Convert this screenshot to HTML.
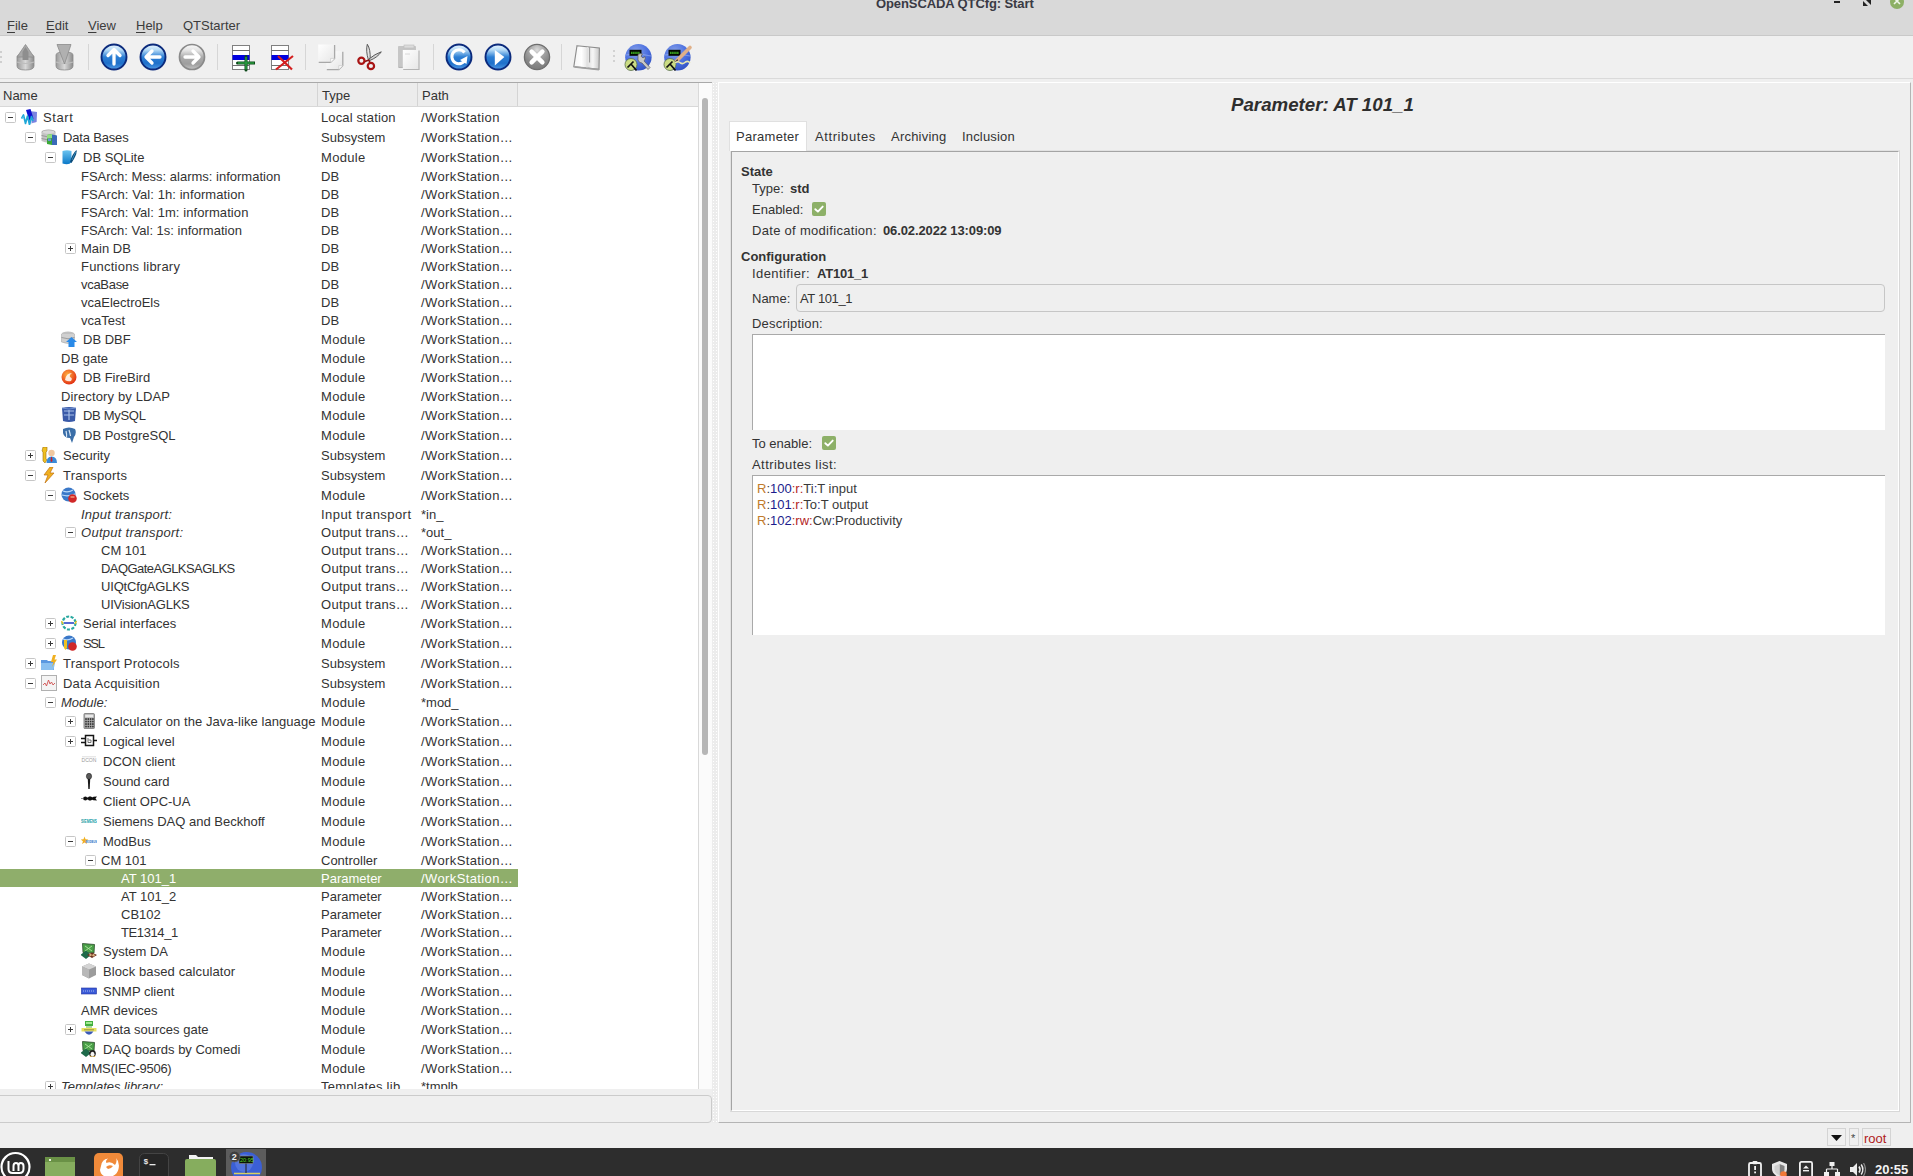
<!DOCTYPE html><html><head><meta charset="utf-8"><title>OpenSCADA QTCfg</title><style>
*{box-sizing:border-box}
html,body{margin:0;padding:0}
body{width:1913px;height:1176px;position:relative;overflow:hidden;background:#efefef;
 font-family:"Liberation Sans",sans-serif;font-size:13px;color:#333333}
.a{position:absolute}
.t{position:absolute;white-space:nowrap;line-height:18px}
#menubar{left:0;top:0;width:1913px;height:36px;background:#d9d9d9}
.mi{position:absolute;top:18px;line-height:16px;color:#3c3c3c}
.ul{text-decoration:underline;text-underline-offset:2px}
#toolbar{left:0;top:36px;width:1913px;height:42px;background:#f0f0f0}
.sep{position:absolute;top:44px;width:1px;height:26px;background:#d6d6d6}
.row{position:absolute;left:0;width:518px}
.box{position:absolute;width:11px;height:11px;border:1px solid #c6c6c6;border-radius:1.5px;background:#fff}
.box:before{content:"";position:absolute;left:2px;top:4px;width:5px;height:1px;background:#3a3a3a}
.box.p:after{content:"";position:absolute;left:4px;top:2px;width:1px;height:5px;background:#3a3a3a}
.ic{position:absolute;width:16px;height:16px}
.nm{position:absolute;white-space:nowrap}
.ty{position:absolute;left:321px;white-space:nowrap}
.pa{position:absolute;left:421px;white-space:nowrap}
.sel{background:#8fae6b;color:#fff}
.sel .nm,.sel .ty,.sel .pa{color:#fff}
</style></head><body><div class="a" id="menubar">
<div class="t" style="left:876px;top:-5px;font-weight:bold;font-size:13px;letter-spacing:-0.1px;color:#3a3a44">OpenSCADA QTCfg: Start</div>
<div class="a" style="left:1834px;top:1px;width:6px;height:2px;background:#222"></div>
<svg class="a" style="left:1863px;top:0px" width="8" height="6"><path d="M0 6 L0 1 L5 6 Z" fill="#222"/><path d="M3 0 L8 0 L8 5 Z" fill="#222"/></svg>
<div class="a" style="left:1890px;top:-5px;width:14px;height:14px;border-radius:7px;background:#8db065"></div>
<svg class="a" style="left:1893px;top:0px" width="8" height="5"><path d="M1 -2 L7 4 M7 -2 L1 4" stroke="#eef6e8" stroke-width="1.6"/></svg>
<div class="mi" style="left:7px"><span class="ul">F</span>ile</div>
<div class="mi" style="left:46px"><span class="ul">E</span>dit</div>
<div class="mi" style="left:88px"><span class="ul">V</span>iew</div>
<div class="mi" style="left:136px"><span class="ul">H</span>elp</div>
<div class="mi" style="left:183px">QTStarter</div>
<div class="a" style="left:0;top:35px;width:1913px;height:1px;background:#c9c9c9"></div>
</div>
<div class="a" id="toolbar"></div>
<div class="a" style="left:0;top:78px;width:1913px;height:1px;background:#dadada"></div>
<svg width="0" height="0" style="position:absolute">
<defs>
<linearGradient id="gBlue" x1="0" x2="0" y1="0" y2="1">
 <stop offset="0" stop-color="#eaf6ff"/><stop offset="0.22" stop-color="#b4daf6"/><stop offset="0.5" stop-color="#2c7ed4"/><stop offset="0.75" stop-color="#1f70ca"/><stop offset="1" stop-color="#4f9ae6"/>
</linearGradient>
<radialGradient id="gGray" cx="0.5" cy="0.22" r="0.8">
 <stop offset="0" stop-color="#dcdcdc"/><stop offset="0.35" stop-color="#a8a8a8"/><stop offset="0.7" stop-color="#888888"/><stop offset="1" stop-color="#7a7a7a"/>
</radialGradient>
<linearGradient id="gCyl" x1="0" x2="1" y1="0" y2="0">
 <stop offset="0" stop-color="#9a9a9a"/><stop offset="0.5" stop-color="#d8d8d8"/><stop offset="1" stop-color="#8c8c8c"/>
</linearGradient>
<linearGradient id="gPage" x1="0" x2="1" y1="0" y2="1"><stop offset="0" stop-color="#ffffff"/><stop offset="1" stop-color="#e6e6e6"/></linearGradient>
<linearGradient id="gLGray" x1="0" x2="0" y1="0" y2="1"><stop offset="0" stop-color="#fafafa"/><stop offset="0.25" stop-color="#e2e2e2"/><stop offset="0.5" stop-color="#acacac"/><stop offset="0.78" stop-color="#9e9e9e"/><stop offset="1" stop-color="#c4c4c4"/></linearGradient>
<linearGradient id="gBook" x1="0" x2="1" y1="0" y2="0"><stop offset="0" stop-color="#f4f4f4"/><stop offset="0.3" stop-color="#ffffff"/><stop offset="0.55" stop-color="#e2e2e2"/><stop offset="0.75" stop-color="#f6f6f6"/><stop offset="1" stop-color="#c8c8c8"/></linearGradient>
<radialGradient id="gScada" cx="0.4" cy="0.3" r="0.75">
 <stop offset="0" stop-color="#8aa4e8"/><stop offset="0.6" stop-color="#4a6ee0"/><stop offset="1" stop-color="#3050c0"/>
</radialGradient>
<linearGradient id="gSql" x1="0" x2="0" y1="0" y2="1">
 <stop offset="0" stop-color="#6cc4f0"/><stop offset="1" stop-color="#0a78c8"/>
</linearGradient>
<radialGradient id="gFire" cx="0.4" cy="0.35" r="0.7">
 <stop offset="0" stop-color="#ffb040"/><stop offset="1" stop-color="#e02810"/>
</radialGradient>
</defs></svg><div class="a" style="left:0;top:51px;width:2px;height:2px;background:#c4c4c4;border-radius:1px"></div>
<div class="a" style="left:0;top:56px;width:2px;height:2px;background:#c4c4c4;border-radius:1px"></div>
<div class="a" style="left:0;top:61px;width:2px;height:2px;background:#c4c4c4;border-radius:1px"></div>
<div class="sep" style="left:88px"></div>
<div class="sep" style="left:217px"></div>
<div class="sep" style="left:305px"></div>
<div class="sep" style="left:433px"></div>
<div class="sep" style="left:561px"></div>
<div class="a" style="left:613px;top:50px;width:2px;height:2px;background:#c8c8c8;border-radius:1px"></div>
<div class="a" style="left:613px;top:55px;width:2px;height:2px;background:#c8c8c8;border-radius:1px"></div>
<div class="a" style="left:613px;top:60px;width:2px;height:2px;background:#c8c8c8;border-radius:1px"></div>
<svg class="a" style="left:15px;top:43px" width="21" height="28" viewBox="0 0 21 28"><path d="M2 14 Q2 11 10.5 11 Q19 11 19 14 V23 Q19 27 10.5 27 Q2 27 2 23 Z" fill="url(#gCyl)" stroke="#8a8a8a" stroke-width="0.8"/><path d="M2 19 Q10.5 22 19 19" stroke="#bdbdbd" stroke-width="1.2" fill="none"/><path d="M2 14 L10.5 1.5 L19 14 Z" fill="#a8a8a8" stroke="#8a8a8a" stroke-width="0.8"/><path d="M7.5 9 L10.5 4 L13.5 9 V17 H7.5 Z" fill="#8e8e8e"/></svg>
<svg class="a" style="left:54px;top:43px" width="21" height="28" viewBox="0 0 21 28"><path d="M2 12 Q2 9 10.5 9 Q19 9 19 12 V23 Q19 27 10.5 27 Q2 27 2 23 Z" fill="url(#gCyl)" stroke="#8a8a8a" stroke-width="0.8"/><path d="M2 19 Q10.5 22 19 19" stroke="#bdbdbd" stroke-width="1.2" fill="none"/><path d="M3 1.5 H17 L10.5 21 Z" fill="#b0b0b0" stroke="#8a8a8a" stroke-width="0.8"/></svg>
<svg class="a" style="left:99.6px;top:43.4px" width="28" height="28" viewBox="0 0 28 28"><circle cx="14" cy="14" r="12.5" fill="url(#gBlue)" stroke="#0b2a7c" stroke-width="1.9"/><path d="M14 6.5 L20 12.5 M14 6.5 L8 12.5 M14 7 V21" stroke="#ffffff" stroke-width="3.3" stroke-linecap="round" fill="none"/></svg>
<svg class="a" style="left:138.5px;top:43.4px" width="28" height="28" viewBox="0 0 28 28"><circle cx="14" cy="14" r="12.5" fill="url(#gBlue)" stroke="#0b2a7c" stroke-width="1.9"/><path d="M7 14 L13 8 M7 14 L13 20 M7.5 14 H21" stroke="#ffffff" stroke-width="3.3" stroke-linecap="round" fill="none"/></svg>
<svg class="a" style="left:177.5px;top:43.4px" width="28" height="28" viewBox="0 0 28 28"><circle cx="14" cy="14" r="12.5" fill="url(#gLGray)" stroke="#8a8a8a" stroke-width="1.7"/><path d="M21 14 L15 8 M21 14 L15 20 M20.5 14 H7" stroke="#ffffff" stroke-width="3.3" stroke-linecap="round" fill="none"/></svg>
<svg class="a" style="left:231px;top:44px" width="24" height="28" viewBox="0 0 24 28"><rect x="1.5" y="1.5" width="17" height="24" fill="#ffffff" stroke="#808080" stroke-width="1"/><path d="M1.5 6.5 H18.5 M1.5 21.5 H18.5" stroke="#707070" stroke-width="1"/><rect x="1.5" y="11" width="17" height="5" fill="#0000e0"/><path d="M15 12.5 V26 M6.5 19 H23.5" stroke="#0e4a1a" stroke-width="3" stroke-linecap="round"/><path d="M15 13 V25.5 M7 19 H23" stroke="#2a9a3e" stroke-width="1.6"/></svg>
<svg class="a" style="left:270px;top:44px" width="26" height="28" viewBox="0 0 26 28"><rect x="1.5" y="1.5" width="17" height="24" fill="#ffffff" stroke="#808080" stroke-width="1"/><path d="M1.5 6.5 H18.5 M1.5 21.5 H18.5" stroke="#707070" stroke-width="1"/><rect x="1.5" y="11" width="17" height="5" fill="#0000e0"/><path d="M6 25.5 L23 12 M8 12 L22 25.5" stroke="#d42020" stroke-width="2.2"/></svg>
<svg class="a" style="left:316px;top:42px" width="30" height="30" viewBox="0 0 30 30"><path d="M10.3 9.3 H26.8 V23.6 L22.8 27.6 H10.3 Z" fill="url(#gPage)"/><path d="M26.8 9.8 V23.6 L22.8 27.6 H10.8" fill="none" stroke="#a8a8a8" stroke-width="1.3"/><path d="M26.8 23.6 H22.8 V27.6" fill="#fafafa" stroke="#c4c4c4" stroke-width="0.6"/><path d="M2.2 2.4 H18.6 V16.4 L14.600000000000001 20.4 H2.2 Z" fill="url(#gPage)"/><path d="M18.6 2.9 V16.4 L14.600000000000001 20.4 H2.7" fill="none" stroke="#a8a8a8" stroke-width="1.3"/><path d="M18.6 16.4 H14.600000000000001 V20.4" fill="#fafafa" stroke="#c4c4c4" stroke-width="0.6"/></svg>
<svg class="a" style="left:356px;top:42px" width="28" height="30" viewBox="0 0 28 30"><path d="M11.3 2.3 Q14.6 7 14.2 17.5 L12.4 17.8 Q9.6 9 11.3 2.3 Z" fill="#e4e4e4" stroke="#4a4a4a" stroke-width="0.9"/><path d="M25.3 9.8 Q21.5 15.5 13.5 18.6 L13 17 Q19 12 25.3 9.8 Z" fill="#d4d4d4" stroke="#4a4a4a" stroke-width="0.9"/><path d="M8.2 19.8 L13 18 M13.2 18.5 L14 21" stroke="#8a1010" stroke-width="1.5"/><circle cx="5.4" cy="18.7" r="3.1" fill="none" stroke="#a81414" stroke-width="2.2"/><circle cx="14.9" cy="24" r="3.2" fill="none" stroke="#a81414" stroke-width="2.2"/></svg>
<svg class="a" style="left:396px;top:42px" width="26" height="30" viewBox="0 0 26 30"><rect x="2" y="4" width="18" height="21.6" rx="0.8" fill="#c6c6c6"/><path d="M2.5 25.4 H19.5" stroke="#b0b0b0" stroke-width="1"/><rect x="8" y="3" width="10" height="3" fill="#dcdcdc" stroke="#bdbdbd" stroke-width="0.6"/><path d="M6.8 8 H23 V27.5 H6.8 Z" fill="url(#gPage)"/><path d="M23 8.5 V27.5 H7.2" fill="none" stroke="#b4b4b4" stroke-width="1.2"/><path d="M9 12 H14" stroke="#d0d0d0" stroke-width="0.8"/></svg>
<svg class="a" style="left:444.5px;top:43.4px" width="28" height="28" viewBox="0 0 28 28"><circle cx="14" cy="14" r="12.5" fill="url(#gBlue)" stroke="#0b2a7c" stroke-width="1.9"/><path d="M19.5 9.5 A7 7 0 1 0 20.5 16" stroke="#ffffff" stroke-width="3" fill="none"/><path d="M15 17 L22.5 13 L21.5 21 Z" fill="#ffffff"/></svg>
<svg class="a" style="left:483.5px;top:43.4px" width="28" height="28" viewBox="0 0 28 28"><circle cx="14" cy="14" r="12.5" fill="url(#gBlue)" stroke="#0b2a7c" stroke-width="1.9"/><path d="M10.8 7 L20.4 14 L10.8 22.5 Z" fill="#ffffff"/></svg>
<svg class="a" style="left:522.5px;top:43.4px" width="28" height="28" viewBox="0 0 28 28"><circle cx="14" cy="14" r="12.6" fill="url(#gGray)" stroke="#6e6e6e" stroke-width="1.3"/><path d="M8.6 8.6 L19.4 19.4 M19.4 8.6 L8.6 19.4" stroke="#ffffff" stroke-width="4.4" stroke-linecap="round"/></svg>
<svg class="a" style="left:570px;top:42px" width="34" height="30" viewBox="0 0 34 30"><path d="M7 3.7 L29.4 6 L29 27.3 L3.8 24.8 Z" fill="url(#gBook)" stroke="#8c8c8c" stroke-width="1.1"/><path d="M4.5 24.9 L29 27.6" stroke="#a0a0a0" stroke-width="1.6"/><path d="M19.6 5 V20.5" stroke="#9a9a9a" stroke-width="1"/><path d="M17.5 5 L17 25.5" stroke="#e0e0e0" stroke-width="1.2"/></svg>
<svg class="a" style="left:624.4px;top:43px" width="32" height="30" viewBox="0 0 32 30"><circle cx="14.4" cy="14.3" r="13.2" fill="url(#gScada)"/><path d="M2 12 Q14 10 27 13" stroke="#9ab0f0" stroke-width="1.2" fill="none" opacity="0.6"/><rect x="5.5" y="6.8" width="12" height="6" fill="#040a04"/><path d="M7 9.8 H16" stroke="#3aa020" stroke-width="2.2" stroke-dasharray="1.6 0.5"/><circle cx="7" cy="21.5" r="6" fill="#cbdc84" stroke="#58704a" stroke-width="0.8"/><path d="M3.5 24.5 L9.5 18.5 M7 21 L12.5 27.5" stroke="#101010" stroke-width="1.7"/><path d="M14 11.5 Q16 10 18.5 11 L17 13.2 L19 15 L21 13.5 Q22 16 20 18 L26 24.5 L24 26.5 L18 20 Q15 20 14 17 Z" fill="#c8c8c8" stroke="#5a5a5a" stroke-width="0.7"/></svg>
<svg class="a" style="left:663.4px;top:43px" width="32" height="30" viewBox="0 0 32 30"><circle cx="14.4" cy="14.3" r="13.2" fill="url(#gScada)"/><path d="M2 12 Q14 10 27 13" stroke="#9ab0f0" stroke-width="1.2" fill="none" opacity="0.6"/><rect x="5.5" y="6.8" width="12" height="6" fill="#040a04"/><path d="M7 9.8 H16" stroke="#3aa020" stroke-width="2.2" stroke-dasharray="1.6 0.5"/><circle cx="7" cy="21.5" r="6" fill="#cbdc84" stroke="#58704a" stroke-width="0.8"/><path d="M3.5 24.5 L9.5 18.5 M7 21 L12.5 27.5" stroke="#101010" stroke-width="1.7"/><path d="M13.5 18 L27 4.5" stroke="#e0b088" stroke-width="3.6" stroke-linecap="round"/><path d="M11.5 19.5 L14.5 16 L15 19 Z" fill="#303030"/><path d="M12 20 Q15 17.5 17.5 20 Q20 21.5 22.5 19 Q25 17.5 27 20" stroke="#e8e8b0" stroke-width="1.6" fill="none"/></svg>
<div class="a" style="left:0;top:82px;width:712px;height:1px;background:#a9a9a9"></div>
<div class="a" style="left:0;top:83px;width:699px;height:24px;background:#ececec;border-bottom:1px solid #d8d8d8"></div>
<div class="a" style="left:518px;top:83px;width:181px;height:23px;background:#efefef"></div>
<div class="a" style="left:317px;top:83px;width:1px;height:23px;background:#d4d4d4"></div>
<div class="a" style="left:417px;top:83px;width:1px;height:23px;background:#d4d4d4"></div>
<div class="a" style="left:517px;top:83px;width:1px;height:23px;background:#d4d4d4"></div>
<div class="t" style="left:3px;top:87px">Name</div>
<div class="t" style="left:322px;top:87px">Type</div>
<div class="t" style="left:422px;top:87px">Path</div>
<div class="a" style="left:0;top:107px;width:698px;height:982px;background:#ffffff;overflow:hidden" id="tv">
<div class="row" style="top:0px;height:20px">
<div class="box" style="left:5px;top:5px"></div>
<div class="ic" style="left:21px;top:2px"><svg width="16" height="16" viewBox="0 0 16 16"><path d="M7 1.5 L16 3 L15.5 13 L9 15 Z" fill="#c8ccf0"/><path d="M10 2.5 L16 3 L15.5 13 L11 14 Z" fill="#7a84e0"/><path d="M5 1 L9.5 0 L12.5 9.5 L8.5 12 Z" fill="#1010d0"/><path d="M0.5 9.5 L2.5 6 L4.5 14.5 L6.5 7 L8.5 15.5 L10.5 7.5 L12 12" stroke="#20a8d8" stroke-width="1.7" fill="none" stroke-linejoin="round"/><path d="M1 10 L2.5 7.5" stroke="#70d0f0" stroke-width="0.8"/></svg></div>
<div class="nm" style="left:43px;top:1px;line-height:20px;letter-spacing:0.6px;">Start</div>
<div class="ty" style="top:1px;line-height:20px;letter-spacing:0.13px;">Local station</div>
<div class="pa" style="top:1px;line-height:20px;letter-spacing:0.39px;">/WorkStation</div>
</div>
<div class="row" style="top:20px;height:20px">
<div class="box" style="left:25px;top:5px"></div>
<div class="ic" style="left:41px;top:2px"><svg width="16" height="16" viewBox="0 0 16 16"><ellipse cx="7.5" cy="3" rx="7" ry="2.6" fill="#a8a8a8"/><path d="M0.5 3 V12 Q7.5 15.5 14.5 12 V3" fill="#c4c4c4"/><ellipse cx="7.5" cy="3" rx="6" ry="1.8" fill="#d8d8d8"/><path d="M0.5 6.5 Q7.5 9.5 14.5 6.5 M0.5 9.5 Q7.5 12.5 14.5 9.5" stroke="#8c8c8c" stroke-width="0.8" fill="none"/><path d="M6 6 L11 5 L11 16 L6 15 Z" fill="#3aa838"/><path d="M6 6 L11 5 L11 9 L6 9.5 Z" fill="#90e080"/><path d="M11 5.5 L16 6.5 V16 L11 16 Z" fill="#3a6ab8"/><rect x="7" y="9.5" width="3" height="2.5" fill="#6a90d8"/></svg></div>
<div class="nm" style="left:63px;top:1px;line-height:20px;letter-spacing:-0.17px;">Data Bases</div>
<div class="ty" style="top:1px;line-height:20px;">Subsystem</div>
<div class="pa" style="top:1px;line-height:20px;letter-spacing:0.39px;">/WorkStation…</div>
</div>
<div class="row" style="top:40px;height:20px">
<div class="box" style="left:45px;top:5px"></div>
<div class="ic" style="left:61px;top:2px"><svg width="16" height="16" viewBox="0 0 16 16"><path d="M1.5 2 Q6 0.5 10.5 2 V13 Q8 16.5 1.5 14.5 Z" fill="url(#gSql)"/><path d="M9 13 Q11 5 15.5 1 Q16.5 5 10.5 14 Z" fill="#0b4a78"/><path d="M11 11 Q13 6 15 2.5" stroke="#48a0d0" stroke-width="0.7" fill="none"/></svg></div>
<div class="nm" style="left:83px;top:1px;line-height:20px;">DB SQLite</div>
<div class="ty" style="top:1px;line-height:20px;letter-spacing:0.3px;">Module</div>
<div class="pa" style="top:1px;line-height:20px;letter-spacing:0.39px;">/WorkStation…</div>
</div>
<div class="row" style="top:60px;height:18px">
<div class="nm" style="left:81px;top:1px;line-height:18px;">FSArch: Mess: alarms: information</div>
<div class="ty" style="top:1px;line-height:18px;">DB</div>
<div class="pa" style="top:1px;line-height:18px;letter-spacing:0.39px;">/WorkStation…</div>
</div>
<div class="row" style="top:78px;height:18px">
<div class="nm" style="left:81px;top:1px;line-height:18px;letter-spacing:0.08px;">FSArch: Val: 1h: information</div>
<div class="ty" style="top:1px;line-height:18px;">DB</div>
<div class="pa" style="top:1px;line-height:18px;letter-spacing:0.39px;">/WorkStation…</div>
</div>
<div class="row" style="top:96px;height:18px">
<div class="nm" style="left:81px;top:1px;line-height:18px;letter-spacing:0.08px;">FSArch: Val: 1m: information</div>
<div class="ty" style="top:1px;line-height:18px;">DB</div>
<div class="pa" style="top:1px;line-height:18px;letter-spacing:0.39px;">/WorkStation…</div>
</div>
<div class="row" style="top:114px;height:18px">
<div class="nm" style="left:81px;top:1px;line-height:18px;">FSArch: Val: 1s: information</div>
<div class="ty" style="top:1px;line-height:18px;">DB</div>
<div class="pa" style="top:1px;line-height:18px;letter-spacing:0.39px;">/WorkStation…</div>
</div>
<div class="row" style="top:132px;height:18px">
<div class="box p" style="left:65px;top:4px"></div>
<div class="nm" style="left:81px;top:1px;line-height:18px;">Main DB</div>
<div class="ty" style="top:1px;line-height:18px;">DB</div>
<div class="pa" style="top:1px;line-height:18px;letter-spacing:0.39px;">/WorkStation…</div>
</div>
<div class="row" style="top:150px;height:18px">
<div class="nm" style="left:81px;top:1px;line-height:18px;letter-spacing:0.22px;">Functions library</div>
<div class="ty" style="top:1px;line-height:18px;">DB</div>
<div class="pa" style="top:1px;line-height:18px;letter-spacing:0.39px;">/WorkStation…</div>
</div>
<div class="row" style="top:168px;height:18px">
<div class="nm" style="left:81px;top:1px;line-height:18px;letter-spacing:-0.3px;">vcaBase</div>
<div class="ty" style="top:1px;line-height:18px;">DB</div>
<div class="pa" style="top:1px;line-height:18px;letter-spacing:0.39px;">/WorkStation…</div>
</div>
<div class="row" style="top:186px;height:18px">
<div class="nm" style="left:81px;top:1px;line-height:18px;">vcaElectroEls</div>
<div class="ty" style="top:1px;line-height:18px;">DB</div>
<div class="pa" style="top:1px;line-height:18px;letter-spacing:0.39px;">/WorkStation…</div>
</div>
<div class="row" style="top:204px;height:18px">
<div class="nm" style="left:81px;top:1px;line-height:18px;">vcaTest</div>
<div class="ty" style="top:1px;line-height:18px;">DB</div>
<div class="pa" style="top:1px;line-height:18px;letter-spacing:0.39px;">/WorkStation…</div>
</div>
<div class="row" style="top:222px;height:20px">
<div class="ic" style="left:61px;top:2px"><svg width="16" height="16" viewBox="0 0 16 16"><ellipse cx="7" cy="3" rx="6.5" ry="2.5" fill="#c0c0c0"/><path d="M0.5 3 V11 Q7 14 13.5 11 V3" fill="#d0d0d0" stroke="#a0a0a0" stroke-width="0.5"/><path d="M0.5 6.5 Q7 9 13.5 6.5" stroke="#909090" stroke-width="0.8" fill="none"/><path d="M10.5 6 L16 11 H13.5 V16 H7.5 V11 H5 Z" fill="#2a8ae8"/></svg></div>
<div class="nm" style="left:83px;top:1px;line-height:20px;">DB DBF</div>
<div class="ty" style="top:1px;line-height:20px;letter-spacing:0.3px;">Module</div>
<div class="pa" style="top:1px;line-height:20px;letter-spacing:0.39px;">/WorkStation…</div>
</div>
<div class="row" style="top:242px;height:18px">
<div class="nm" style="left:61px;top:1px;line-height:18px;">DB gate</div>
<div class="ty" style="top:1px;line-height:18px;letter-spacing:0.3px;">Module</div>
<div class="pa" style="top:1px;line-height:18px;letter-spacing:0.39px;">/WorkStation…</div>
</div>
<div class="row" style="top:260px;height:20px">
<div class="ic" style="left:61px;top:2px"><svg width="16" height="16" viewBox="0 0 16 16"><circle cx="8" cy="8" r="7.5" fill="url(#gFire)"/><path d="M4 11 Q5 4 11 4 Q8 6 9 8 Q12 9 10 12 Q7 13 4 11" fill="#ffffff" opacity="0.85"/></svg></div>
<div class="nm" style="left:83px;top:1px;line-height:20px;">DB FireBird</div>
<div class="ty" style="top:1px;line-height:20px;letter-spacing:0.3px;">Module</div>
<div class="pa" style="top:1px;line-height:20px;letter-spacing:0.39px;">/WorkStation…</div>
</div>
<div class="row" style="top:280px;height:18px">
<div class="nm" style="left:61px;top:1px;line-height:18px;letter-spacing:0.13px;">Directory by LDAP</div>
<div class="ty" style="top:1px;line-height:18px;letter-spacing:0.3px;">Module</div>
<div class="pa" style="top:1px;line-height:18px;letter-spacing:0.39px;">/WorkStation…</div>
</div>
<div class="row" style="top:298px;height:20px">
<div class="ic" style="left:61px;top:2px"><svg width="16" height="16" viewBox="0 0 16 16"><path d="M1 1 Q8 -1 15 1 L14 14 Q8 16 2 14 Z" fill="#3a5aa8"/><path d="M3 4 H13 M3 8 H13 M8 3 V13" stroke="#a8c0e8" stroke-width="1.2"/><path d="M1 1 Q8 3 15 1" stroke="#7090d0" stroke-width="1" fill="none"/></svg></div>
<div class="nm" style="left:83px;top:1px;line-height:20px;letter-spacing:-0.3px;">DB MySQL</div>
<div class="ty" style="top:1px;line-height:20px;letter-spacing:0.3px;">Module</div>
<div class="pa" style="top:1px;line-height:20px;letter-spacing:0.39px;">/WorkStation…</div>
</div>
<div class="row" style="top:318px;height:20px">
<div class="ic" style="left:61px;top:2px"><svg width="16" height="16" viewBox="0 0 16 16"><path d="M2 2 Q8 -1 14 2 Q16 6 13 10 L11 16 L9 11 Q3 11 2 6 Z" fill="#3a6ea8"/><path d="M5 4 Q6 8 5.5 10 M8 3 Q9 6 9.5 9" stroke="#d8e8f8" stroke-width="1.2" fill="none"/></svg></div>
<div class="nm" style="left:83px;top:1px;line-height:20px;">DB PostgreSQL</div>
<div class="ty" style="top:1px;line-height:20px;letter-spacing:0.3px;">Module</div>
<div class="pa" style="top:1px;line-height:20px;letter-spacing:0.39px;">/WorkStation…</div>
</div>
<div class="row" style="top:338px;height:20px">
<div class="box p" style="left:25px;top:5px"></div>
<div class="ic" style="left:41px;top:2px"><svg width="16" height="16" viewBox="0 0 16 16"><path d="M2 0 H6 V4 L5 5 V12 L6 13 L4 16 L2 14 V5 L1 4 Z" fill="#f0c020" stroke="#a07010" stroke-width="0.6"/><circle cx="10.5" cy="6" r="3.2" fill="#f0c8a0"/><path d="M5.5 16 Q5.5 9.5 10.5 9.5 Q16 9.5 16 16 Z" fill="#3a8ad8"/><path d="M10 10 L11 10 L11.5 14 L10.5 15 L9.5 14 Z" fill="#d02020"/></svg></div>
<div class="nm" style="left:63px;top:1px;line-height:20px;">Security</div>
<div class="ty" style="top:1px;line-height:20px;">Subsystem</div>
<div class="pa" style="top:1px;line-height:20px;letter-spacing:0.39px;">/WorkStation…</div>
</div>
<div class="row" style="top:358px;height:20px">
<div class="box" style="left:25px;top:5px"></div>
<div class="ic" style="left:41px;top:2px"><svg width="16" height="16" viewBox="0 0 16 16"><path d="M9 0 L3 8 H7 L4 16 L13 6 H9 L12 0 Z" fill="#f0b020" stroke="#c07010" stroke-width="0.7"/></svg></div>
<div class="nm" style="left:63px;top:1px;line-height:20px;letter-spacing:0.25px;">Transports</div>
<div class="ty" style="top:1px;line-height:20px;">Subsystem</div>
<div class="pa" style="top:1px;line-height:20px;letter-spacing:0.39px;">/WorkStation…</div>
</div>
<div class="row" style="top:378px;height:20px">
<div class="box" style="left:45px;top:5px"></div>
<div class="ic" style="left:61px;top:2px"><svg width="16" height="16" viewBox="0 0 16 16"><circle cx="7.5" cy="7.5" r="7" fill="#3a78c8"/><path d="M2 4 Q7 6 12 3 M1 8 Q7 10 14 7" stroke="#b8d8f8" stroke-width="1.2" fill="none"/><circle cx="11.5" cy="11.5" r="4.3" fill="#d02828"/><path d="M9.5 10 L13.5 10" stroke="#ffd0a0" stroke-width="1"/></svg></div>
<div class="nm" style="left:83px;top:1px;line-height:20px;">Sockets</div>
<div class="ty" style="top:1px;line-height:20px;letter-spacing:0.3px;">Module</div>
<div class="pa" style="top:1px;line-height:20px;letter-spacing:0.39px;">/WorkStation…</div>
</div>
<div class="row" style="top:398px;height:18px">
<div class="nm" style="left:81px;top:1px;line-height:18px;font-style:italic;letter-spacing:0.23px;">Input transport:</div>
<div class="ty" style="top:1px;line-height:18px;letter-spacing:0.44px;">Input transport</div>
<div class="pa" style="top:1px;line-height:18px;">*in_</div>
</div>
<div class="row" style="top:416px;height:18px">
<div class="box" style="left:65px;top:4px"></div>
<div class="nm" style="left:81px;top:1px;line-height:18px;font-style:italic;letter-spacing:0.28px;">Output transport:</div>
<div class="ty" style="top:1px;line-height:18px;letter-spacing:0.27px;">Output trans…</div>
<div class="pa" style="top:1px;line-height:18px;">*out_</div>
</div>
<div class="row" style="top:434px;height:18px">
<div class="nm" style="left:101px;top:1px;line-height:18px;">CM 101</div>
<div class="ty" style="top:1px;line-height:18px;letter-spacing:0.27px;">Output trans…</div>
<div class="pa" style="top:1px;line-height:18px;letter-spacing:0.39px;">/WorkStation…</div>
</div>
<div class="row" style="top:452px;height:18px">
<div class="nm" style="left:101px;top:1px;line-height:18px;letter-spacing:-0.55px;">DAQGateAGLKSAGLKS</div>
<div class="ty" style="top:1px;line-height:18px;letter-spacing:0.27px;">Output trans…</div>
<div class="pa" style="top:1px;line-height:18px;letter-spacing:0.39px;">/WorkStation…</div>
</div>
<div class="row" style="top:470px;height:18px">
<div class="nm" style="left:101px;top:1px;line-height:18px;letter-spacing:-0.17px;">UIQtCfgAGLKS</div>
<div class="ty" style="top:1px;line-height:18px;letter-spacing:0.27px;">Output trans…</div>
<div class="pa" style="top:1px;line-height:18px;letter-spacing:0.39px;">/WorkStation…</div>
</div>
<div class="row" style="top:488px;height:18px">
<div class="nm" style="left:101px;top:1px;line-height:18px;letter-spacing:-0.23px;">UIVisionAGLKS</div>
<div class="ty" style="top:1px;line-height:18px;letter-spacing:0.27px;">Output trans…</div>
<div class="pa" style="top:1px;line-height:18px;letter-spacing:0.39px;">/WorkStation…</div>
</div>
<div class="row" style="top:506px;height:20px">
<div class="box p" style="left:45px;top:5px"></div>
<div class="ic" style="left:61px;top:2px"><svg width="16" height="16" viewBox="0 0 16 16"><circle cx="8" cy="8" r="6.5" fill="none" stroke="#28a8a0" stroke-width="2.2" stroke-dasharray="3 1.5"/><path d="M3 8 H13" stroke="#2848c8" stroke-width="1.6"/><path d="M0.5 6 L2 9 M15.5 6 L14 9" stroke="#e8c020" stroke-width="1.4"/></svg></div>
<div class="nm" style="left:83px;top:1px;line-height:20px;">Serial interfaces</div>
<div class="ty" style="top:1px;line-height:20px;letter-spacing:0.3px;">Module</div>
<div class="pa" style="top:1px;line-height:20px;letter-spacing:0.39px;">/WorkStation…</div>
</div>
<div class="row" style="top:526px;height:20px">
<div class="box p" style="left:45px;top:5px"></div>
<div class="ic" style="left:61px;top:2px"><svg width="16" height="16" viewBox="0 0 16 16"><circle cx="8" cy="7.5" r="7" fill="#3a78c8"/><path d="M2 4 Q7 6 12 3" stroke="#b8d8f8" stroke-width="1.2" fill="none"/><path d="M3 5 H6 V13 L4.5 15 L3 13 Z" fill="#f0c020"/><circle cx="11.5" cy="11.5" r="4.3" fill="#d02828"/></svg></div>
<div class="nm" style="left:83px;top:1px;line-height:20px;letter-spacing:-1.3px;">SSL</div>
<div class="ty" style="top:1px;line-height:20px;letter-spacing:0.3px;">Module</div>
<div class="pa" style="top:1px;line-height:20px;letter-spacing:0.39px;">/WorkStation…</div>
</div>
<div class="row" style="top:546px;height:20px">
<div class="box p" style="left:25px;top:5px"></div>
<div class="ic" style="left:41px;top:2px"><svg width="16" height="16" viewBox="0 0 16 16"><path d="M0 5 H6 L7 6 H13 V15 H0 Z" fill="#5a98e0"/><path d="M0 8 H14 L12.5 15 H0 Z" fill="#8ac0f0"/><path d="M12 0 L10 7 H12.5 L11 12 L16 4.5 H13.5 L15 0 Z" fill="#f0b020"/></svg></div>
<div class="nm" style="left:63px;top:1px;line-height:20px;letter-spacing:0.2px;">Transport Protocols</div>
<div class="ty" style="top:1px;line-height:20px;">Subsystem</div>
<div class="pa" style="top:1px;line-height:20px;letter-spacing:0.39px;">/WorkStation…</div>
</div>
<div class="row" style="top:566px;height:20px">
<div class="box" style="left:25px;top:5px"></div>
<div class="ic" style="left:41px;top:2px"><svg width="16" height="16" viewBox="0 0 16 16"><rect x="0.5" y="0.5" width="15" height="15" fill="#f4f4f4" stroke="#b0b0b0" stroke-width="1"/><path d="M2 10 L4 8 L5.5 11 L7.5 5 L9 9 L10.5 7 L12 10 L14 8" stroke="#d05050" stroke-width="0.9" fill="none"/></svg></div>
<div class="nm" style="left:63px;top:1px;line-height:20px;letter-spacing:0.23px;">Data Acquisition</div>
<div class="ty" style="top:1px;line-height:20px;">Subsystem</div>
<div class="pa" style="top:1px;line-height:20px;letter-spacing:0.39px;">/WorkStation…</div>
</div>
<div class="row" style="top:586px;height:18px">
<div class="box" style="left:45px;top:4px"></div>
<div class="nm" style="left:61px;top:1px;line-height:18px;font-style:italic;">Module:</div>
<div class="ty" style="top:1px;line-height:18px;letter-spacing:0.3px;">Module</div>
<div class="pa" style="top:1px;line-height:18px;">*mod_</div>
</div>
<div class="row" style="top:604px;height:20px">
<div class="box p" style="left:65px;top:5px"></div>
<div class="ic" style="left:81px;top:2px"><svg width="16" height="16" viewBox="0 0 16 16"><rect x="3" y="0.6" width="10.4" height="15" rx="0.8" fill="#b8b8b8" stroke="#6a6a6a" stroke-width="0.8"/><rect x="4.2" y="1.8" width="8" height="2.4" fill="#e8e8e8"/><rect x="4.2" y="5.2" width="1.6" height="1.7" fill="#303030"/><rect x="6.5" y="5.2" width="1.6" height="1.7" fill="#303030"/><rect x="8.8" y="5.2" width="1.6" height="1.7" fill="#303030"/><rect x="11.1" y="5.2" width="1.6" height="1.7" fill="#303030"/><rect x="4.2" y="7.7" width="1.6" height="1.7" fill="#303030"/><rect x="6.5" y="7.7" width="1.6" height="1.7" fill="#303030"/><rect x="8.8" y="7.7" width="1.6" height="1.7" fill="#303030"/><rect x="11.1" y="7.7" width="1.6" height="1.7" fill="#303030"/><rect x="4.2" y="10.2" width="1.6" height="1.7" fill="#303030"/><rect x="6.5" y="10.2" width="1.6" height="1.7" fill="#303030"/><rect x="8.8" y="10.2" width="1.6" height="1.7" fill="#303030"/><rect x="11.1" y="10.2" width="1.6" height="1.7" fill="#303030"/><rect x="4.2" y="12.7" width="1.6" height="1.7" fill="#303030"/><rect x="6.5" y="12.7" width="1.6" height="1.7" fill="#303030"/><rect x="8.8" y="12.7" width="1.6" height="1.7" fill="#303030"/><rect x="11.1" y="12.7" width="1.6" height="1.7" fill="#303030"/></svg></div>
<div class="nm" style="left:103px;top:1px;line-height:20px;letter-spacing:0.06px;">Calculator on the Java-like language</div>
<div class="ty" style="top:1px;line-height:20px;letter-spacing:0.3px;">Module</div>
<div class="pa" style="top:1px;line-height:20px;letter-spacing:0.39px;">/WorkStation…</div>
</div>
<div class="row" style="top:624px;height:20px">
<div class="box p" style="left:65px;top:5px"></div>
<div class="ic" style="left:81px;top:2px"><svg width="16" height="16" viewBox="0 0 16 16"><rect x="4.5" y="2.5" width="8" height="10" fill="#ffffff" stroke="#151515" stroke-width="1.5"/><path d="M0 5.5 H4 M0 9.5 H4 M12.5 7.5 H16" stroke="#151515" stroke-width="1.5"/><path d="M7 5 V9.5 H10 V7 H7.5" stroke="#505050" stroke-width="0.8" fill="none"/></svg></div>
<div class="nm" style="left:103px;top:1px;line-height:20px;">Logical level</div>
<div class="ty" style="top:1px;line-height:20px;letter-spacing:0.3px;">Module</div>
<div class="pa" style="top:1px;line-height:20px;letter-spacing:0.39px;">/WorkStation…</div>
</div>
<div class="row" style="top:644px;height:20px">
<div class="ic" style="left:81px;top:2px"><svg width="16" height="16" viewBox="0 0 16 16"><text x="0.5" y="9" font-family="Liberation Sans" font-size="5" fill="#9a9a9a" textLength="15" lengthAdjust="spacingAndGlyphs">DCON</text><path d="M1 3.8 H15" stroke="#d0d0d0" stroke-width="0.7"/></svg></div>
<div class="nm" style="left:103px;top:1px;line-height:20px;">DCON client</div>
<div class="ty" style="top:1px;line-height:20px;letter-spacing:0.3px;">Module</div>
<div class="pa" style="top:1px;line-height:20px;letter-spacing:0.39px;">/WorkStation…</div>
</div>
<div class="row" style="top:664px;height:20px">
<div class="ic" style="left:81px;top:2px"><svg width="16" height="16" viewBox="0 0 16 16"><ellipse cx="8" cy="3.3" rx="2.6" ry="3" fill="#5a5a5a" stroke="#202020" stroke-width="0.6"/><path d="M6.8 6 H9.2 L8.7 16 H7.3 Z" fill="#1a1a1a"/></svg></div>
<div class="nm" style="left:103px;top:1px;line-height:20px;">Sound card</div>
<div class="ty" style="top:1px;line-height:20px;letter-spacing:0.3px;">Module</div>
<div class="pa" style="top:1px;line-height:20px;letter-spacing:0.39px;">/WorkStation…</div>
</div>
<div class="row" style="top:684px;height:20px">
<div class="ic" style="left:81px;top:2px"><svg width="16" height="16" viewBox="0 0 16 16"><path d="M0 5.5 H5" stroke="#606060" stroke-width="0.7"/><path d="M2.5 4 L5 3.5 Q6.5 5.5 8 3.5 L10 3.5 Q11 5 12.5 3.8 L16 3.5 L14.5 5.5 L16 7.5 L12.5 7.2 Q11 6 10 7.5 L8 7.5 Q6.5 5.5 5 7.5 L2.5 7 Z" fill="#0e0e0e"/></svg></div>
<div class="nm" style="left:103px;top:1px;line-height:20px;">Client OPC-UA</div>
<div class="ty" style="top:1px;line-height:20px;letter-spacing:0.3px;">Module</div>
<div class="pa" style="top:1px;line-height:20px;letter-spacing:0.39px;">/WorkStation…</div>
</div>
<div class="row" style="top:704px;height:20px">
<div class="ic" style="left:81px;top:2px"><svg width="16" height="16" viewBox="0 0 16 16"><text x="0" y="10.2" font-family="Liberation Sans" font-size="4.6" font-weight="bold" fill="#1aa0a8" textLength="16" lengthAdjust="spacingAndGlyphs">SIEMENS</text></svg></div>
<div class="nm" style="left:103px;top:1px;line-height:20px;">Siemens DAQ and Beckhoff</div>
<div class="ty" style="top:1px;line-height:20px;letter-spacing:0.3px;">Module</div>
<div class="pa" style="top:1px;line-height:20px;letter-spacing:0.39px;">/WorkStation…</div>
</div>
<div class="row" style="top:724px;height:20px">
<div class="box" style="left:65px;top:5px"></div>
<div class="ic" style="left:81px;top:2px"><svg width="16" height="16" viewBox="0 0 16 16"><path d="M3.5 3.5 L4.5 6.3 L7.3 6.5 L5.1 8.2 L5.9 11 L3.5 9.4 L1.1 11 L1.9 8.2 L-0.3 6.5 L2.5 6.3 Z" fill="#f0b020"/><text x="4.5" y="9.6" font-family="Liberation Sans" font-size="3.8" font-weight="bold" fill="#2a70c8" textLength="11.5" lengthAdjust="spacingAndGlyphs">MODBUS</text></svg></div>
<div class="nm" style="left:103px;top:1px;line-height:20px;">ModBus</div>
<div class="ty" style="top:1px;line-height:20px;letter-spacing:0.3px;">Module</div>
<div class="pa" style="top:1px;line-height:20px;letter-spacing:0.39px;">/WorkStation…</div>
</div>
<div class="row" style="top:744px;height:18px">
<div class="box" style="left:85px;top:4px"></div>
<div class="nm" style="left:101px;top:1px;line-height:18px;">CM 101</div>
<div class="ty" style="top:1px;line-height:18px;">Controller</div>
<div class="pa" style="top:1px;line-height:18px;letter-spacing:0.39px;">/WorkStation…</div>
</div>
<div class="row sel" style="top:762px;height:18px">
<div class="nm" style="left:121px;top:1px;line-height:18px;">AT 101_1</div>
<div class="ty" style="top:1px;line-height:18px;">Parameter</div>
<div class="pa" style="top:1px;line-height:18px;letter-spacing:0.39px;">/WorkStation…</div>
</div>
<div class="row" style="top:780px;height:18px">
<div class="nm" style="left:121px;top:1px;line-height:18px;">AT 101_2</div>
<div class="ty" style="top:1px;line-height:18px;">Parameter</div>
<div class="pa" style="top:1px;line-height:18px;letter-spacing:0.39px;">/WorkStation…</div>
</div>
<div class="row" style="top:798px;height:18px">
<div class="nm" style="left:121px;top:1px;line-height:18px;">CB102</div>
<div class="ty" style="top:1px;line-height:18px;">Parameter</div>
<div class="pa" style="top:1px;line-height:18px;letter-spacing:0.39px;">/WorkStation…</div>
</div>
<div class="row" style="top:816px;height:18px">
<div class="nm" style="left:121px;top:1px;line-height:18px;letter-spacing:-0.4px;">TE1314_1</div>
<div class="ty" style="top:1px;line-height:18px;">Parameter</div>
<div class="pa" style="top:1px;line-height:18px;letter-spacing:0.39px;">/WorkStation…</div>
</div>
<div class="row" style="top:834px;height:20px">
<div class="ic" style="left:81px;top:2px"><svg width="16" height="16" viewBox="0 0 16 16"><path d="M1.5 0.5 L13.5 1.5 L13 10 L2 9.5 Z" fill="#4aa048" stroke="#2a4a2a" stroke-width="0.8"/><path d="M4 3 L11 8 M11 3 L4 8" stroke="#b0e8a0" stroke-width="0.9"/><path d="M-0.5 12 L5 7.5 L10 12 L5 16 Z" fill="#1e6a4a"/><path d="M6 12 L11 9.5 L16 12 L11 15 Z" fill="#6a3020"/><circle cx="9.5" cy="12" r="1.2" fill="#d8b080"/><circle cx="12.5" cy="12.3" r="1.2" fill="#d8b080"/></svg></div>
<div class="nm" style="left:103px;top:1px;line-height:20px;">System DA</div>
<div class="ty" style="top:1px;line-height:20px;letter-spacing:0.3px;">Module</div>
<div class="pa" style="top:1px;line-height:20px;letter-spacing:0.39px;">/WorkStation…</div>
</div>
<div class="row" style="top:854px;height:20px">
<div class="ic" style="left:81px;top:2px"><svg width="16" height="16" viewBox="0 0 16 16"><path d="M8 0.5 L15 3.5 V12 L8 15.5 L1 12 V3.5 Z" fill="#9c9c9c"/><path d="M8 0.5 L15 3.5 L8 6.5 L1 3.5 Z" fill="#d4d4d4"/><path d="M8 6.5 V15.5 L1 12 V3.5 Z" fill="#b8b8b8"/></svg></div>
<div class="nm" style="left:103px;top:1px;line-height:20px;letter-spacing:0.1px;">Block based calculator</div>
<div class="ty" style="top:1px;line-height:20px;letter-spacing:0.3px;">Module</div>
<div class="pa" style="top:1px;line-height:20px;letter-spacing:0.39px;">/WorkStation…</div>
</div>
<div class="row" style="top:874px;height:20px">
<div class="ic" style="left:81px;top:2px"><svg width="16" height="16" viewBox="0 0 16 16"><rect x="0.5" y="5" width="15" height="6" fill="#3a5ad8" stroke="#2030a0" stroke-width="0.6"/><path d="M2 8 H14" stroke="#b8c8f0" stroke-width="0.9" stroke-dasharray="1 1"/></svg></div>
<div class="nm" style="left:103px;top:1px;line-height:20px;">SNMP client</div>
<div class="ty" style="top:1px;line-height:20px;letter-spacing:0.3px;">Module</div>
<div class="pa" style="top:1px;line-height:20px;letter-spacing:0.39px;">/WorkStation…</div>
</div>
<div class="row" style="top:894px;height:18px">
<div class="nm" style="left:81px;top:1px;line-height:18px;">AMR devices</div>
<div class="ty" style="top:1px;line-height:18px;letter-spacing:0.3px;">Module</div>
<div class="pa" style="top:1px;line-height:18px;letter-spacing:0.39px;">/WorkStation…</div>
</div>
<div class="row" style="top:912px;height:20px">
<div class="box p" style="left:65px;top:5px"></div>
<div class="ic" style="left:81px;top:2px"><svg width="16" height="16" viewBox="0 0 16 16"><rect x="4" y="0" width="8" height="5" fill="#44b040"/><rect x="5" y="1" width="6" height="2" fill="#a0e890"/><path d="M0.5 7 H15.5 V10.5 H0.5 Z" fill="#e8e060"/><path d="M3 8.8 H13" stroke="#707030" stroke-width="0.7"/><path d="M3.5 10.5 Q8 17 12.5 10.5 Z" fill="#3a5ab8"/><rect x="5" y="5" width="6" height="2" fill="#b0d8a0"/></svg></div>
<div class="nm" style="left:103px;top:1px;line-height:20px;">Data sources gate</div>
<div class="ty" style="top:1px;line-height:20px;letter-spacing:0.3px;">Module</div>
<div class="pa" style="top:1px;line-height:20px;letter-spacing:0.39px;">/WorkStation…</div>
</div>
<div class="row" style="top:932px;height:20px">
<div class="ic" style="left:81px;top:2px"><svg width="16" height="16" viewBox="0 0 16 16"><path d="M1.5 0.5 L13.5 1.5 L13 10 L2 9.5 Z" fill="#4aa048" stroke="#2a4a2a" stroke-width="0.8"/><path d="M4 3 L11 8 M11 3 L4 8" stroke="#b0e8a0" stroke-width="0.9"/><path d="M-0.5 12 L5 7.5 L10 12 L5 16 Z" fill="#1e6a4a"/><ellipse cx="11.5" cy="12.5" rx="3.3" ry="3.5" fill="#202020"/><ellipse cx="11.5" cy="13.3" rx="2" ry="2.5" fill="#f4f4f4"/><path d="M8.5 15.5 L10.5 14.5 L10.5 16 Z M14.5 15.5 L12.5 14.5 L12.5 16 Z" fill="#f0b020"/></svg></div>
<div class="nm" style="left:103px;top:1px;line-height:20px;">DAQ boards by Comedi</div>
<div class="ty" style="top:1px;line-height:20px;letter-spacing:0.3px;">Module</div>
<div class="pa" style="top:1px;line-height:20px;letter-spacing:0.39px;">/WorkStation…</div>
</div>
<div class="row" style="top:952px;height:18px">
<div class="nm" style="left:81px;top:1px;line-height:18px;letter-spacing:-0.27px;">MMS(IEC-9506)</div>
<div class="ty" style="top:1px;line-height:18px;letter-spacing:0.3px;">Module</div>
<div class="pa" style="top:1px;line-height:18px;letter-spacing:0.39px;">/WorkStation…</div>
</div>
<div class="row" style="top:970px;height:18px">
<div class="box p" style="left:45px;top:4px"></div>
<div class="nm" style="left:61px;top:1px;line-height:18px;font-style:italic;">Templates library:</div>
<div class="ty" style="top:1px;line-height:18px;letter-spacing:0.27px;">Templates lib…</div>
<div class="pa" style="top:1px;line-height:18px;">*tmplb_</div>
</div>
</div>
<div class="a" style="left:698px;top:83px;width:1px;height:1006px;background:#d9d9d9"></div>
<div class="a" style="left:699px;top:83px;width:13px;height:1006px;background:#fbfbfb"></div>
<div class="a" style="left:702px;top:98px;width:6px;height:657px;border-radius:3px;background:#b6b6b6"></div>
<div class="a" style="left:712px;top:82px;width:7px;height:1041px;background-image:radial-gradient(circle, #ffffff 0.8px, transparent 1px);background-size:3px 3px;background-color:#ececec"></div>
<div class="a" style="left:-4px;top:1095px;width:716px;height:28px;border:1px solid #cbcbcb;border-radius:4px;background:#efefef"></div>
<div class="a" style="left:718px;top:82px;width:1193px;height:1041px;border-top:1px solid #ffffff;border-left:1px solid #ffffff;border-right:1px solid #b4b4b4;border-bottom:1px solid #b4b4b4"></div>
<div class="t" style="left:1231px;top:94px;line-height:22px;font-size:18.7px;font-weight:bold;font-style:italic;color:#2e2e2e">Parameter: AT 101_1</div>
<div class="a" style="left:730px;top:150px;width:1170px;height:962px;border-top:1px solid #e2e2e2;border-left:1px solid #e2e2e2;border-right:1px solid #d8d8d8;border-bottom:1px solid #d8d8d8"></div>
<div class="a" style="left:731px;top:151px;width:1168px;height:960px;border-top:1px solid #a4a4a4;border-left:1px solid #a4a4a4;border-right:1px solid #ffffff;border-bottom:1px solid #ffffff"></div>
<div class="a" style="left:729px;top:121px;width:78px;height:30px;background:#ffffff;border-top:1px solid #e0e0e0;border-left:1px solid #e0e0e0;border-right:1px solid #e0e0e0"></div>
<div class="t" style="left:736px;top:127.5px;letter-spacing:0.28px">Parameter</div>
<div class="t" style="left:815px;top:127.5px;letter-spacing:0.6px">Attributes</div>
<div class="t" style="left:891px;top:127.5px;letter-spacing:0.22px">Archiving</div>
<div class="t" style="left:962px;top:127.5px;letter-spacing:0.17px">Inclusion</div>
<div class="t" style="left:741px;top:163.3px;font-weight:bold;">State</div>
<div class="t" style="left:752px;top:179.5px;">Type:</div>
<div class="t" style="left:790px;top:179.5px;font-weight:bold;">std</div>
<div class="t" style="left:752px;top:201.3px;">Enabled:</div>
<div class="a" style="left:812px;top:202px;width:14px;height:14px"><svg width="14" height="14" viewBox="0 0 14 14"><rect x="0" y="0" width="14" height="14" rx="2" fill="#8db068"/><path d="M3.3 7.2 L5.9 9.6 L10.7 4.6" fill="none" stroke="#ffffff" stroke-width="1.9" stroke-linecap="round" stroke-linejoin="round"/></svg></div>
<div class="t" style="left:752px;top:221.5px;letter-spacing:0.3px;">Date of modification:</div>
<div class="t" style="left:883px;top:221.5px;font-weight:bold;letter-spacing:-0.12px;">06.02.2022 13:09:09</div>
<div class="t" style="left:741px;top:247.5px;font-weight:bold;">Configuration</div>
<div class="t" style="left:752px;top:264.5px;letter-spacing:0.42px;">Identifier:</div>
<div class="t" style="left:817px;top:264.5px;font-weight:bold;letter-spacing:-0.2px;">AT101_1</div>
<div class="t" style="left:752px;top:289.5px;">Name:</div>
<div class="a" style="left:796px;top:284px;width:1089px;height:28px;border:1px solid #c6c6c6;border-radius:4px;background:#efefef"></div>
<div class="t" style="left:800px;top:289.5px;letter-spacing:-0.38px;">AT 101_1</div>
<div class="t" style="left:752px;top:314.5px;letter-spacing:0.19px;">Description:</div>
<div class="a" style="left:752px;top:334px;width:1133px;height:96px;background:#ffffff;border-top:1px solid #a9a9a9;border-left:1px solid #a9a9a9"></div>
<div class="t" style="left:752px;top:435.4px;">To enable:</div>
<div class="a" style="left:822px;top:436px;width:14px;height:14px"><svg width="14" height="14" viewBox="0 0 14 14"><rect x="0" y="0" width="14" height="14" rx="2" fill="#8db068"/><path d="M3.3 7.2 L5.9 9.6 L10.7 4.6" fill="none" stroke="#ffffff" stroke-width="1.9" stroke-linecap="round" stroke-linejoin="round"/></svg></div>
<div class="t" style="left:752px;top:456px;letter-spacing:0.44px;">Attributes list:</div>
<div class="a" style="left:752px;top:475px;width:1133px;height:160px;background:#ffffff;border-top:1px solid #a9a9a9;border-left:1px solid #a9a9a9"></div>
<div class="t" style="left:757px;top:480.40px"><span style="color:#c07a2c">R</span><span style="color:#3a3a3a">:</span><span style="color:#1c1c8c">100</span><span style="color:#b42626">:r:</span><span style="color:#3a3a3a">Ti</span><span style="color:#1c1c8c">:</span><span style="color:#3a3a3a">T input</span></div>
<div class="t" style="left:757px;top:496.05px"><span style="color:#c07a2c">R</span><span style="color:#3a3a3a">:</span><span style="color:#1c1c8c">101</span><span style="color:#b42626">:r:</span><span style="color:#3a3a3a">To</span><span style="color:#1c1c8c">:</span><span style="color:#3a3a3a">T output</span></div>
<div class="t" style="left:757px;top:511.70px"><span style="color:#c07a2c">R</span><span style="color:#3a3a3a">:</span><span style="color:#1c1c8c">102</span><span style="color:#b42626">:rw:</span><span style="color:#3a3a3a">Cw</span><span style="color:#1c1c8c">:</span><span style="color:#3a3a3a">Productivity</span></div>
<div class="a" style="left:1827px;top:1128px;width:19px;height:18px;border:1px solid #d4d4d4;background:#efefef"></div>
<svg class="a" style="left:1831px;top:1135px" width="11" height="6"><path d="M0 0 L11 0 L5.5 6 Z" fill="#111"/></svg>
<div class="a" style="left:1849px;top:1128px;width:10px;height:18px;border:1px solid #d4d4d4;background:#efefef"></div>
<div class="t" style="left:1851px;top:1129px;font-size:11px;color:#444">*</div>
<div class="a" style="left:1862px;top:1128px;width:29px;height:18px;border:1px solid #d4d4d4;background:#efefef"></div>
<div class="t" style="left:1864px;top:1129.5px;color:#b01c1c">root</div>
<div class="a" style="left:0;top:1148px;width:1913px;height:28px;background:#2d2d2d"></div>
<svg class="a" style="left:0;top:1148px" width="34" height="28" viewBox="0 0 34 28"><circle cx="15.5" cy="19" r="14" fill="none" stroke="#ffffff" stroke-width="2.2"/><path d="M8.5 13 V21 Q8.5 25 12.5 25 H19.5 Q23.5 25 23.5 21 V18 Q23.5 15 20.8 15 Q18.5 15 18.5 18 V23 M18.5 18 Q18.5 15 16 15 Q13.5 15 13.5 18 V23" fill="none" stroke="#ffffff" stroke-width="2"/></svg>
<svg class="a" style="left:45px;top:1157px" width="30" height="19"><rect x="0" y="0" width="30" height="19" fill="#86ad5e"/><rect x="0" y="0" width="30" height="5" fill="#6a9146"/><rect x="4" y="2" width="2" height="2" fill="#e8f0e0"/></svg>
<svg class="a" style="left:94px;top:1153px" width="29" height="23"><rect x="0" y="0" width="29" height="30" rx="5" fill="#f08a3a"/><path d="M7 13 Q8 6 14 5.5 Q11 8 12.5 10 Q17 8 21 12 Q23.5 8 22 5 Q26 9 24.5 16 Q23 23 15 24 Q7 24 6 17 Z" fill="#ffffff"/><path d="M12 14 Q15 11 19 13 Q17 16 14 16 Z" fill="#f08a3a"/></svg>
<svg class="a" style="left:139px;top:1153px" width="30" height="23"><rect x="0.5" y="0.5" width="29" height="30" rx="5" fill="#262626" stroke="#444" stroke-width="1"/><text x="4.5" y="10.5" font-family="Liberation Mono" font-size="8" font-weight="bold" fill="#e8e8e8">$</text><rect x="10.5" y="11" width="6" height="1.3" fill="#e8e8e8"/></svg>
<svg class="a" style="left:185px;top:1155px" width="31" height="21"><path d="M4 0 H11 L13 2 H28 V6 H4 Z" fill="#f2f2f2"/><rect x="0" y="4" width="31" height="20" rx="2" fill="#86ad5e"/></svg>
<div class="a" style="left:226px;top:1149px;width:40px;height:27px;background:#5c5c5c"></div>
<svg class="a" style="left:226px;top:1149px" width="40" height="27"><circle cx="20.5" cy="18.5" r="15.5" fill="#3b5fd6"/><circle cx="18" cy="14" r="9" fill="#6a8ae8" opacity="0.5"/><rect x="13" y="7" width="14" height="7.5" fill="#0b160b" stroke="#8a8a8a" stroke-width="0.6"/><text x="14" y="13.2" font-family="Liberation Sans" font-size="5.5" fill="#5ed22a">20:95</text><path d="M8 24.5 H34" stroke="#d8d060" stroke-width="1.5"/><path d="M20 14.5 V24" stroke="#202020" stroke-width="1"/><circle cx="8.5" cy="7.5" r="5.5" fill="#3e3e3e" stroke="#666" stroke-width="0.8"/><text x="5.8" y="11" font-family="Liberation Sans" font-size="9" font-weight="bold" fill="#f0f0f0">2</text></svg>
<svg class="a" style="left:1748px;top:1161px" width="14" height="15"><rect x="1" y="2" width="12" height="14" rx="1.5" fill="none" stroke="#f2f2f2" stroke-width="1.8"/><rect x="4.5" y="0" width="5" height="3.2" rx="1" fill="#f2f2f2"/><rect x="6.2" y="5" width="1.8" height="4" fill="#f2f2f2"/><rect x="6.2" y="10.5" width="1.8" height="1.8" fill="#f2f2f2"/></svg>
<svg class="a" style="left:1771px;top:1161px" width="17" height="15"><path d="M8.5 0 L16 3 V8 Q16 13 8.5 17 Q1 13 1 8 V3 Z" fill="#e8e8e8"/><path d="M8.5 3 L13.5 5 V8.5 Q13.5 12 8.5 14.5 Z" fill="#808080"/><path d="M8.5 3 L3.5 5 V8.5 Q3.5 12 8.5 14.5 Z" fill="#d0d0d0"/><circle cx="12.5" cy="13.5" r="3.3" fill="#f07838"/></svg>
<svg class="a" style="left:1799px;top:1161px" width="14" height="15"><rect x="0.9" y="0.9" width="12.2" height="16" rx="1.5" fill="none" stroke="#f0f0f0" stroke-width="1.8"/><path d="M4 7.5 L7 4.5 L10 7.5 Z" fill="#f0f0f0"/><rect x="4" y="9" width="6" height="1.4" fill="#f0f0f0"/></svg>
<svg class="a" style="left:1824px;top:1162px" width="16" height="14"><rect x="5.5" y="0" width="5" height="4" fill="#f0f0f0"/><path d="M8 4 V7 M2.5 7 H13.5 M2.5 7 V10 M13.5 7 V10" stroke="#f0f0f0" stroke-width="1.2" fill="none"/><rect x="0" y="10" width="5" height="4" fill="#f0f0f0"/><rect x="11" y="10" width="5" height="4" fill="#f0f0f0"/></svg>
<svg class="a" style="left:1850px;top:1163px" width="16" height="13"><path d="M0 4 H3 L7 0 V13 L3 9 H0 Z" fill="#ececec"/><path d="M9 3.5 Q11 6.5 9 9.5" stroke="#ececec" stroke-width="1.6" fill="none"/><path d="M11.2 1.5 Q14.5 6.5 11.2 11.5" stroke="#ececec" stroke-width="1.5" fill="none"/><path d="M13.5 0 Q17.5 6.5 13.5 13" stroke="#8a8a8a" stroke-width="1.2" fill="none"/></svg>
<div class="t" style="left:1875px;top:1161px;font-weight:bold;color:#f4f4f4;font-size:13px">20:55</div></body></html>
